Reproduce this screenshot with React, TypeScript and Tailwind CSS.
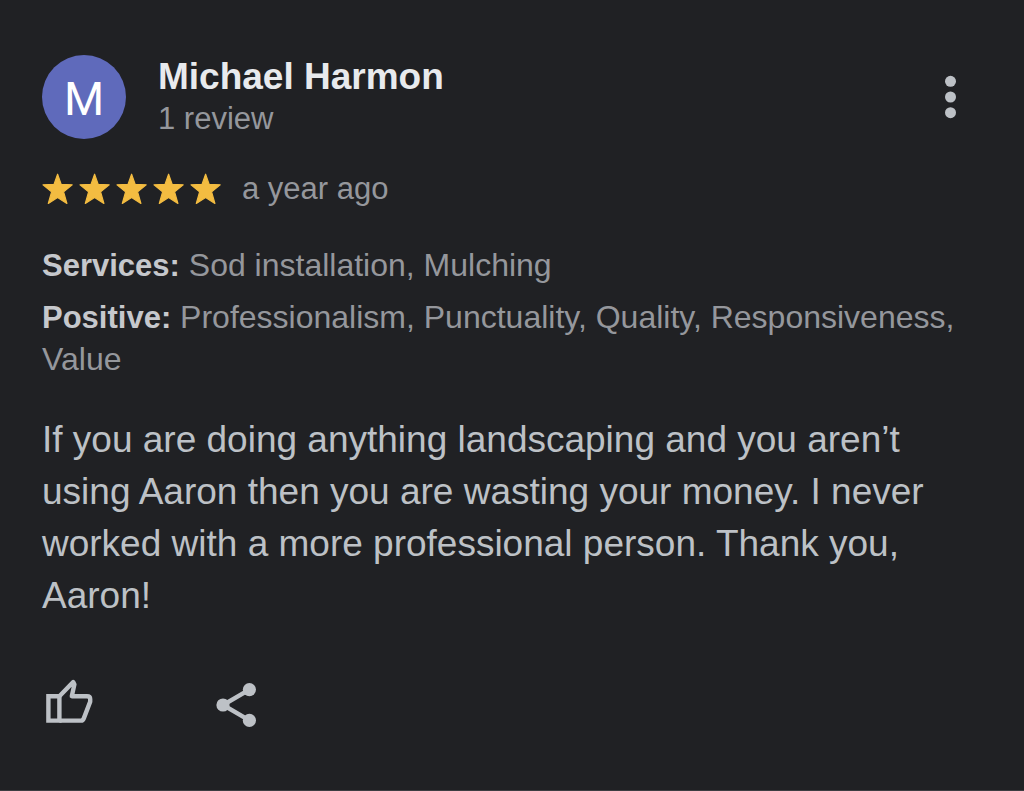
const STAR_COUNT = 5;

function Star() {
  return (
    <svg viewBox="0 0 32 32" className="size-8" fill="#f3bc41" aria-hidden="true">
      <path
        d="M15.6 1.2 19.2 11.4 30.2 11.8 21.6 18.9 24.9 30.4 15.6 24.6 6.3 30.4 9.6 18.9 1 11.8 12 11.4Z"
        stroke="#f3bc41"
        strokeWidth="1.2"
        strokeLinejoin="round"
      />
    </svg>
  );
}

function MoreIcon() {
  return (
    <svg viewBox="0 0 12 44" className="h-11 w-3" fill="#bdc1c6" aria-hidden="true">
      <circle cx="5.5" cy="6.3" r="5.5" />
      <circle cx="5.5" cy="22" r="5.5" />
      <circle cx="5.5" cy="37.7" r="5.5" />
    </svg>
  );
}

function ThumbIcon() {
  return (
    <svg
      viewBox="0 0 48 46"
      className="h-[46px] w-12"
      fill="none"
      stroke="#bdc1c6"
      strokeWidth="4.4"
      strokeLinejoin="round"
      aria-hidden="true"
    >
      <path d="M2.4 18.2H13.4V42.6H2.4Z" strokeLinejoin="miter" />
      <path d="M13.4 18.2 27.2 4 28.4 6.4 25.8 18.2H41Q44.2 18.2 44.2 21V23.6L37.8 40.4Q37 42.6 35 42.6H13.4" />
    </svg>
  );
}

function ShareIcon() {
  return (
    <svg viewBox="0 0 42 46" className="h-[46px] w-[42px]" fill="#bdc1c6" aria-hidden="true">
      <path d="M33.4 7.6 7 23 33.4 38.4" fill="none" stroke="#bdc1c6" strokeWidth="4.4" />
      <circle cx="33.4" cy="7.6" r="6.6" />
      <circle cx="7" cy="23" r="6.6" />
      <circle cx="33.4" cy="38.4" r="6.6" />
    </svg>
  );
}

function Detail({ label, value }: { label: string; value: string }) {
  return (
    <p className="text-[32px] leading-[42px]">
      <strong className="text-[31px] leading-none font-bold text-[#c6c8cc]">{label}:</strong> {value}
    </p>
  );
}

export default function App() {
  return (
    <article className="min-h-screen border-b border-[#3c3e42] bg-[#202124] px-[42px] pt-[55px] pb-14 font-['Liberation_Sans',Arial,sans-serif] text-[31px] leading-[42px] text-[#95979c]">
      <header className="flex items-center justify-between">
        <div className="flex items-center gap-8">
          <div className="flex size-[84px] items-center justify-center rounded-full bg-[#5f6abb] pt-1 font-[Roboto,sans-serif] text-[46px] text-white">
            M
          </div>
          <div className="-mb-0.5">
            <h1 className="text-[37px] font-bold text-[#e8eaed]">Michael Harmon</h1>
            <p>1 review</p>
          </div>
        </div>
        <button type="button" aria-label="More options" className="mr-[25px]">
          <MoreIcon />
        </button>
      </header>

      <div className="mt-[29px] flex items-center gap-5">
        <div className="flex gap-[5px]" role="img" aria-label="5 out of 5 stars">
          {Array.from({ length: STAR_COUNT }, (_, i) => (
            <Star key={i} />
          ))}
        </div>
        <span>a year ago</span>
      </div>

      <div className="mt-[34px] flex flex-col gap-[10px]">
        <Detail label="Services" value="Sod installation, Mulching" />
        <Detail label="Positive" value="Professionalism, Punctuality, Quality, Responsiveness, Value" />
      </div>

      <p className="mt-[34px] text-[37px] leading-[52px] text-[#bdc1c6]">
        If you are doing anything landscaping and you aren’t using Aaron then you are wasting your
        money. I never worked with a more professional person. Thank you, Aaron!
      </p>

      <footer className="mt-14 flex items-start gap-[122px] pl-1">
        <button type="button" aria-label="Like">
          <ThumbIcon />
        </button>
        <button type="button" aria-label="Share" className="pt-1">
          <ShareIcon />
        </button>
      </footer>
    </article>
  );
}
